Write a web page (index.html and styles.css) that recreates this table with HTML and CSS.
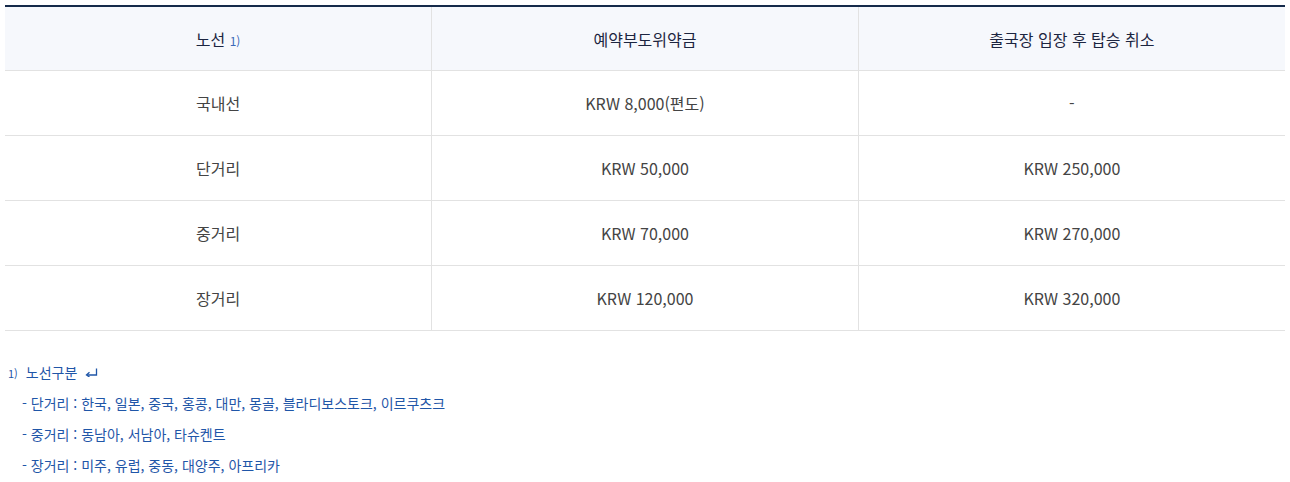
FILE: index.html
```html
<!DOCTYPE html>
<html lang="ko">
<head>
<meta charset="utf-8">
<link rel="stylesheet" href="styles.css">
</head>
<body>
<div class="wrap">
  <table class="fee">
    <thead>
      <tr>
        <th>노선 <sup class="ref">1)</sup></th>
        <th>예약부도위약금</th>
        <th>출국장 입장 후 탑승 취소</th>
      </tr>
    </thead>
    <tbody>
      <tr><td>국내선</td><td>KRW 8,000(편도)</td><td>-</td></tr>
      <tr><td>단거리</td><td>KRW 50,000</td><td>KRW 250,000</td></tr>
      <tr><td>중거리</td><td>KRW 70,000</td><td>KRW 270,000</td></tr>
      <tr><td>장거리</td><td>KRW 120,000</td><td>KRW 320,000</td></tr>
    </tbody>
  </table>
  <div class="notes">
    <p class="note-title"><span class="num">1)</span> 노선구분 <svg class="back" width="13" height="9" viewBox="0 0 13 9"><path d="M11.5 0.5V7H2" fill="none" stroke="#1f56a8" stroke-width="1.3"/><path d="M4.5 4.3L1.5 7L4.5 9" fill="none" stroke="#1f56a8" stroke-width="1.3"/></svg></p>
    <ul class="note-list">
      <li>- 단거리 : 한국, 일본, 중국, 홍콩, 대만, 몽골, 블라디보스토크, 이르쿠츠크</li>
      <li>- 중거리 : 동남아, 서남아, 타슈켄트</li>
      <li>- 장거리 : 미주, 유럽, 중동, 대양주, 아프리카</li>
    </ul>
  </div>
</div>
</body>
</html>
```
FILE: styles.css
```css
* { box-sizing: border-box; }
html, body { margin: 0; padding: 0; background: #fff; }
body {
  font-family: "Noto Sans CJK KR", "Noto Sans", sans-serif;
  font-size: 16px;
  color: #444;
}
.wrap { padding: 5px 5px 0 5px; }
.fee {
  width: 100%;
  border-collapse: collapse;
  table-layout: fixed;
  border-top: 2px solid #152a4a;
}
.fee th, .fee td {
  height: 65px;
  text-align: center;
  vertical-align: middle;
  padding: 0;
  border-bottom: 1px solid #e2e2e2;
  border-left: 1px solid #e2e2e2;
}
.fee th:first-child, .fee td:first-child { border-left: none; }
.fee th {
  background: #f6f8fc;
  color: #1c2540;
  font-weight: 400;
  height: 64px;
  padding-top: 2px;
}
.fee td { color: #444; font-weight: 400; }
.ref {
  font-size: 12px;
  color: #3b68b8;
  vertical-align: baseline;
  font-weight: 400;
}
.notes { padding: 31px 3px 0 3px; color: #1f56a8; font-size: 14px; }
.note-title { margin: 0 0 10px 0; line-height: 20px; }
.num { font-size: 11px; margin-right: 4px; }
.back { margin-left: 4px; vertical-align: 1px; }
.note-list { list-style: none; margin: 0; padding: 0 0 0 14px; }
.note-list li { line-height: 20px; margin-bottom: 11px; }
```
